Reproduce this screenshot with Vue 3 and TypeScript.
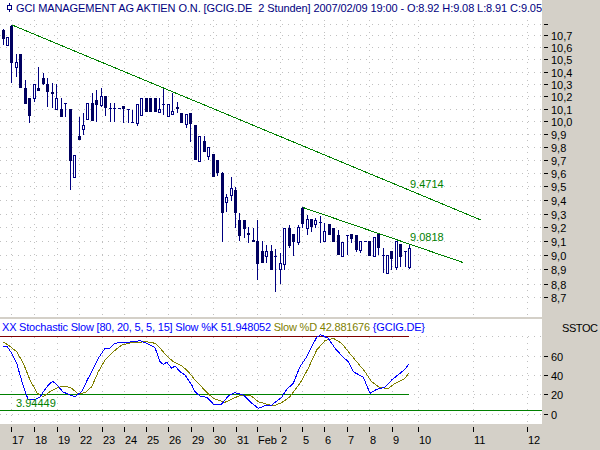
<template>
  <div class="chart">
    <svg class="pane" width="542" height="317">
      <g class="grid">
        <line v-for="y in priceRows" :key="y" x1="0" x2="542" :y1="y + 0.5" :y2="y + 0.5" />
        <line v-for="t in dateTicks" :key="t.x" :x1="t.x + 0.5" :x2="t.x + 0.5" y1="20" y2="317" />
      </g>

      <text class="title" x="16" y="12" textLength="526">{{ title }}</text>
      <g class="candle">
        <line x1="9.5" x2="9.5" y1="3" y2="12" />
        <rect x="7.5" y="5.5" width="4" height="4" />
      </g>

      <g v-for="(c, i) in candles" :key="i" class="candle">
        <line :x1="c.x + 0.5" :x2="c.x + 0.5" :y1="c.high" :y2="c.low" />
        <rect v-if="c.kind === 'open'" :x="c.x - 0.5" :y="c.top + 0.5" width="2" :height="c.bottom - c.top" />
        <rect v-else-if="c.kind === 'fill'" class="solid" :x="c.x - 1" :y="c.top" width="3" :height="c.bottom - c.top" />
        <line v-else :x1="c.x - 1" :x2="c.x + 2" :y1="c.top + 0.5" :y2="c.top + 0.5" />
      </g>

      <line class="trend" x1="12" y1="25" x2="481" y2="220" />
      <line class="trend" x1="303" y1="207.5" x2="463" y2="262.5" />
      <text class="green" x="410" y="188">9.4714</text>
      <text class="green" x="410" y="241">9.0818</text>
    </svg>
    <svg class="axis" width="58" height="317">
      <g v-for="p in priceTicks" :key="p.y">
        <line x1="2" x2="6" :y1="p.y + 0.5" :y2="p.y + 0.5" />
        <text x="9" :y="p.y + 5">{{ p.label }}</text>
      </g>
    </svg>

    <div class="divider"></div>

    <svg class="pane" width="542" height="105">
      <g class="grid">
        <line v-for="y in [17, 37, 56, 75, 95]" :key="y" x1="0" x2="542" :y1="y + 0.5" :y2="y + 0.5" />
        <line v-for="t in dateTicks" :key="t.x" :x1="t.x + 0.5" :x2="t.x + 0.5" y1="18" y2="105" />
      </g>

      <text class="title" x="2" y="12" textLength="423"><tspan class="blue">XX Stochastic Slow [80, 20, 5, 5, 15] Slow %K 51.948052 </tspan><tspan class="olive">Slow %D 42.881676 </tspan><tspan class="blue">{GCIG.DE}</tspan></text>

      <line class="level-red" x1="0" x2="409" y1="17.5" y2="17.5" />
      <line class="level" x1="0" x2="409" y1="75.5" y2="75.5" />
      <line class="level" x1="0" x2="542" y1="91.5" y2="91.5" />
      <polyline class="slow-d" :points="slowD" />
      <polyline class="slow-k" :points="slowK" />
      <text class="green" x="16" y="88">3.94449</text>
    </svg>
    <svg class="axis" width="58" height="105">
      <text x="20" y="13" textLength="36">SSTOC</text>
      <g v-for="p in stochTicks" :key="p.label">
        <line x1="2" x2="6" :y1="p.y + 0.5" :y2="p.y + 0.5" />
        <text x="9" :y="p.y + 5">{{ p.label }}</text>
      </g>
    </svg>

    <svg class="dates" width="600" height="26">
      <g v-for="t in dateTicks" :key="t.x">
        <line :x1="t.x + 0.5" :x2="t.x + 0.5" y1="3" y2="8" />
        <text :x="t.x + 1" y="20">{{ t.label }}</text>
      </g>
    </svg>
  </div>
</template>

<script setup lang="ts">
type Kind = "fill" | "open" | "dash";

interface Candle {
  x: number;
  high: number;
  low: number;
  top: number;
  bottom: number;
  kind: Kind;
}

const title =
  "GCI MANAGEMENT AG AKTIEN O.N. [GCIG.DE  2 Stunden] 2007/02/09 19:00 - O:8.92 H:9.08 L:8.91 C:9.05";

const labels = [
  "17", "18", "19", "22", "23", "24", "25", "26", "29", "30", "31",
  "Feb", "2", "5", "6", "7", "8", "9", "10", "11", "12",
];
const tickX = [
  11, 34, 57, 79, 102, 124, 146, 168, 191, 213, 236,
  257, 280, 302, 324, 347, 369, 392, 418, 473, 527,
];
const dateTicks = tickX.map((x, i) => ({ x, label: labels[i] }));

const priceY = [
  24, 35, 47, 59, 72, 84, 96, 109, 121, 134, 147, 160, 173, 186, 200, 214,
  227, 241, 255, 269, 284, 297,
];
const priceNames = [
  "", "10,7", "10,6", "10,5", "10,4", "10,3", "10,2", "10,1", "10,0", "9,9", "9,8",
  "9,7", "9,6", "9,5", "9,4", "9,3", "9,2", "9,1", "9,0", "8,9", "8,8", "8,7",
];
const priceRows = priceY;
const priceTicks = priceY.map((y, i) => ({ y, label: priceNames[i] }));

const stochTicks = [
  { y: 37, label: "60" },
  { y: 56, label: "40" },
  { y: 75, label: "20" },
  { y: 95, label: "0" },
];

// x, high, low, body top, body bottom, kind
const rows: [number, number, number, number, number, Kind][] = [
  [3, 29, 45, 30, 39, "fill"],
  [7, 37, 45, 37, 45, "open"],
  [11, 25, 83, 26, 63, "fill"],
  [16, 54, 77, 62, 67, "open"],
  [20, 54, 88, 54, 88, "fill"],
  [25, 80, 104, 88, 104, "fill"],
  [29, 98, 123, 98, 116, "fill"],
  [34, 84, 102, 84, 98, "open"],
  [38, 67, 91, 88, 91, "fill"],
  [43, 73, 85, 78, 84, "fill"],
  [47, 78, 107, 84, 92, "fill"],
  [52, 83, 108, 92, 94, "fill"],
  [56, 84, 110, 98, 109, "open"],
  [61, 98, 117, 109, 117, "fill"],
  [65, 103, 117, 103, 103, "dash"],
  [70, 109, 190, 109, 161, "fill"],
  [74, 155, 177, 155, 177, "open"],
  [79, 117, 140, 136, 140, "fill"],
  [83, 113, 135, 125, 129, "open"],
  [87, 103, 119, 103, 119, "open"],
  [92, 93, 121, 103, 121, "fill"],
  [96, 90, 122, 100, 105, "fill"],
  [101, 88, 107, 96, 105, "open"],
  [105, 96, 116, 96, 108, "fill"],
  [110, 103, 122, 108, 108, "dash"],
  [114, 103, 122, 108, 108, "dash"],
  [119, 108, 109, 108, 108, "dash"],
  [123, 106, 123, 106, 109, "fill"],
  [128, 109, 123, 109, 109, "dash"],
  [132, 110, 123, 122, 122, "dash"],
  [137, 104, 126, 104, 123, "open"],
  [141, 98, 115, 98, 115, "open"],
  [146, 98, 112, 98, 112, "fill"],
  [150, 98, 112, 98, 112, "fill"],
  [155, 98, 112, 98, 112, "fill"],
  [159, 98, 112, 109, 112, "open"],
  [163, 89, 115, 104, 104, "dash"],
  [168, 104, 116, 104, 116, "open"],
  [172, 93, 114, 111, 114, "open"],
  [177, 102, 113, 107, 109, "fill"],
  [181, 113, 123, 113, 123, "fill"],
  [186, 114, 128, 114, 124, "open"],
  [190, 113, 142, 113, 124, "fill"],
  [195, 125, 160, 125, 160, "fill"],
  [199, 136, 161, 136, 161, "open"],
  [204, 136, 152, 141, 152, "fill"],
  [208, 147, 160, 147, 156, "open"],
  [213, 154, 177, 154, 177, "fill"],
  [217, 160, 176, 160, 173, "fill"],
  [222, 172, 242, 173, 213, "fill"],
  [226, 194, 212, 197, 202, "open"],
  [231, 177, 201, 188, 195, "open"],
  [235, 187, 228, 190, 213, "fill"],
  [239, 213, 241, 220, 236, "fill"],
  [244, 220, 238, 220, 229, "fill"],
  [248, 227, 243, 233, 235, "fill"],
  [253, 228, 242, 240, 242, "fill"],
  [257, 220, 280, 241, 264, "fill"],
  [262, 241, 263, 251, 263, "fill"],
  [266, 245, 263, 251, 256, "open"],
  [271, 245, 270, 251, 270, "fill"],
  [275, 249, 292, 256, 256, "dash"],
  [280, 253, 284, 263, 269, "open"],
  [284, 228, 270, 228, 264, "open"],
  [289, 225, 248, 228, 246, "fill"],
  [293, 234, 256, 234, 242, "fill"],
  [298, 225, 245, 227, 242, "open"],
  [302, 207, 228, 208, 224, "fill"],
  [307, 215, 235, 219, 228, "open"],
  [311, 219, 232, 219, 227, "fill"],
  [315, 218, 228, 220, 224, "open"],
  [320, 216, 243, 222, 222, "dash"],
  [324, 223, 242, 231, 241, "open"],
  [329, 224, 235, 224, 235, "fill"],
  [333, 228, 242, 228, 242, "fill"],
  [338, 230, 255, 235, 255, "fill"],
  [342, 242, 256, 242, 256, "open"],
  [347, 235, 255, 235, 235, "dash"],
  [351, 234, 243, 234, 239, "fill"],
  [356, 235, 252, 235, 250, "fill"],
  [360, 241, 253, 241, 250, "open"],
  [365, 241, 242, 241, 241, "dash"],
  [369, 241, 256, 241, 256, "fill"],
  [374, 237, 256, 237, 256, "open"],
  [378, 233, 255, 233, 248, "fill"],
  [383, 248, 273, 255, 255, "dash"],
  [387, 255, 273, 255, 273, "open"],
  [391, 251, 270, 251, 259, "fill"],
  [396, 241, 270, 241, 267, "open"],
  [400, 244, 267, 244, 257, "fill"],
  [405, 251, 267, 251, 251, "dash"],
  [409, 244, 269, 248, 267, "open"],
];

const candles: Candle[] = rows.map(([x, high, low, top, bottom, kind]) => ({
  x,
  high,
  low,
  top,
  bottom,
  kind,
}));

// traced in 3x scale from the picture, first number of a pair is x
const toPoints = (pts: number[][]) =>
  pts.map(([x, y]) => `${(x / 3).toFixed(1)},${(y / 3 - 19).toFixed(1)}`).join(" ");

const slowK = toPoints([
  [8, 138], [22, 140], [35, 160], [50, 190], [60, 225], [72, 265], [85, 300], [105, 298],
  [120, 292], [130, 275], [145, 255], [158, 244], [172, 255], [188, 275], [205, 283],
  [225, 290], [245, 275], [262, 240], [280, 205], [295, 175], [315, 145], [330, 145],
  [345, 130], [365, 127], [390, 126], [420, 122], [440, 130], [465, 143], [480, 185],
  [490, 193], [500, 187], [515, 205], [525, 198], [540, 215], [555, 225], [575, 255],
  [585, 275], [600, 288], [620, 292], [640, 312], [665, 312], [685, 288], [705, 278],
  [730, 285], [750, 305], [775, 325], [795, 317], [815, 315], [845, 292], [860, 268],
  [880, 250], [900, 200], [920, 170], [935, 140], [950, 112], [962, 104], [985, 115],
  [1005, 145], [1030, 172], [1045, 185], [1060, 215], [1090, 232], [1110, 280],
  [1130, 268], [1155, 262], [1175, 240], [1200, 220], [1215, 208], [1227, 192],
]);

const slowD = toPoints([
  [8, 125], [25, 135], [50, 155], [70, 190], [90, 240], [112, 280], [130, 290], [150, 275],
  [175, 262], [195, 258], [215, 265], [235, 282], [255, 278], [275, 260], [295, 215],
  [315, 180], [340, 155], [365, 135], [395, 128], [440, 125], [465, 130], [485, 150],
  [500, 168], [520, 185], [545, 197], [565, 215], [585, 240], [600, 255], [615, 272],
  [640, 295], [675, 307], [700, 295], [725, 285], [750, 285], [775, 305], [820, 318],
  [845, 308], [870, 290], [900, 250], [925, 205], [950, 150], [975, 122], [1000, 115],
  [1025, 130], [1045, 155], [1070, 185], [1095, 215], [1115, 245], [1140, 263],
  [1165, 265], [1185, 250], [1200, 243], [1215, 235], [1226, 220],
]);
</script>

<style scoped>
.chart {
  display: grid;
  grid-template-columns: 542px 58px;
  grid-template-rows: 317px 2px 105px 26px;
  width: 600px;
  height: 450px;
  background: #d4d0c8;
  font-family: "Liberation Sans", Arial, sans-serif;
  font-size: 11px;
}

svg {
  display: block;
}

.pane {
  background: #fff;
}

.divider {
  grid-column: 1 / 3;
}

.dates {
  grid-column: 1 / 3;
}

.grid line {
  stroke: #c0c0c0;
  stroke-width: 1;
  stroke-dasharray: 1 5;
  shape-rendering: crispEdges;
}

.title {
  fill: #000080;
  white-space: pre;
}

.blue {
  fill: #0000ff;
}

.olive {
  fill: #808000;
}

.green {
  fill: #008000;
}

.candle line,
.candle rect {
  stroke: #000080;
  stroke-width: 1;
  fill: #fff;
  shape-rendering: crispEdges;
}

.candle rect.solid {
  fill: #000060;
  stroke: none;
}

.trend,
.level {
  stroke: #008000;
  stroke-width: 1;
  shape-rendering: crispEdges;
}

.level-red {
  stroke: #800000;
  stroke-width: 1;
  shape-rendering: crispEdges;
}

.slow-k,
.slow-d {
  fill: none;
  stroke-width: 1;
  shape-rendering: crispEdges;
}

.slow-k {
  stroke: #0000ff;
}

.slow-d {
  stroke: #808000;
}

.axis line,
.dates line {
  stroke: #000;
  stroke-width: 1;
  shape-rendering: crispEdges;
}

.axis text,
.dates text {
  fill: #000;
}
</style>
